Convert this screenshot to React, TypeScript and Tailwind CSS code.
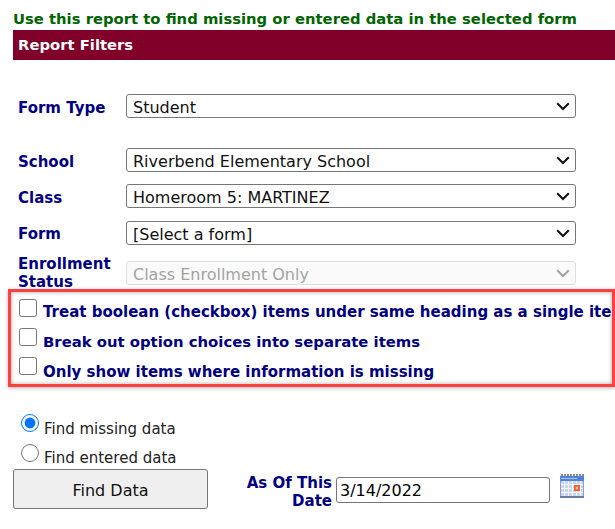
const font = "font-['DejaVu_Sans',Verdana,sans-serif]";

function Row({ label, value, options, className = "", labelClass = "translate-y-[2px]" }: { label: string; value: string; options?: boolean; className?: string; labelClass?: string }) {
  return (
    <div className={`flex items-center ${className}`}>
      <label className={`w-[113px] pl-[5px] text-[15px] leading-[18px] font-bold text-[#000080] ${labelClass}`}>{label}</label>
      <div className="relative h-[24px] w-[450px]">
        <select
          defaultValue={value}
          disabled={options}
          className={`h-full w-full appearance-none rounded-[3px] border pt-[3px] pl-[6px] text-[16px] leading-[20px] ${options ? "border-[#e0e0e0] bg-[#fafafa] text-[#a3a3a3]" : "border-[#767676] bg-white text-[#111111]"}`}
        >
          <option>{value}</option>
        </select>
        <svg width="14" height="9" viewBox="0 0 14 9" className="pointer-events-none absolute top-[8px] right-[6px]" fill="none" stroke={options ? "#a3a3a3" : "#111111"} strokeWidth="2">
          <path d="M1.2 1.2 L7 7 L12.8 1.2" />
        </svg>
      </div>
    </div>
  );
}

function Check({ label, textClass }: { label: string; textClass: string }) {
  return (
    <label className="flex h-[29px] items-center whitespace-nowrap">
      <input type="checkbox" className="mr-[6px] ml-[8px] h-[18px] w-[18px] shrink-0 -translate-y-[3px]" />
      <span className={`font-bold text-[#000080] ${textClass}`}>{label}</span>
    </label>
  );
}

function Calendar() {
  return (
    <svg width="24" height="24" viewBox="0 0 24 24" className="ml-[10px] -translate-y-[3px]">
      <rect x="0" y="2" width="24" height="21" fill="#8da0c8" />
      {[1, 4, 7, 10, 13, 16, 19, 22].map((x) => <rect key={x} x={x} y="0" width="2" height="2" fill="#8a8a8a" />)}
      <rect x="0" y="2" width="24" height="5" fill="#4f82dc" />
      <rect x="1" y="4" width="16" height="1" fill="#a9c4ee" />
      <rect x="1" y="7" width="22" height="15" fill="#c9d6ee" />
      {[4, 8, 12, 16, 20].map((x) => <rect key={x} x={x} y="7" width="1" height="15" fill="#f4f7fc" />)}
      {[10, 14, 18].map((y) => <rect key={y} x="1" y={y} width="22" height="1" fill="#f4f7fc" />)}
      <rect x="14" y="11" width="6" height="6" fill="#f2683c" />
      <rect x="16" y="13" width="2" height="2" fill="#f8d0c0" />
      <rect x="0" y="22" width="24" height="2" fill="#6a7aa0" />
    </svg>
  );
}

export default function App() {
  return (
    <div className={`h-[529px] w-[615px] overflow-hidden bg-white ${font}`}>
      <p className="h-[30px] whitespace-nowrap pt-[10px] pl-[13px] text-[14.8px] leading-[17px] font-bold text-[#006400]">
        Use this report to find missing or entered data in the selected form
      </p>
      <div className="ml-[13px] flex h-[30px] items-center pl-[5px] text-[14.8px] font-bold text-white bg-[#80002a]">Report Filters</div>

      <div className="ml-[13px] flex flex-col pt-[34px]">
        <Row label="Form Type" value="Student" className="h-[24px]" />
        <Row label="School" value="Riverbend Elementary School" className="mt-[30px] h-[24px]" />
        <Row label="Class" value="Homeroom 5: MARTINEZ" className="mt-[12px] h-[24px]" />
        <Row label="Form" value="[Select a form]" labelClass="translate-y-[1px]" className="mt-[13px] h-[24px]" />
        <Row label="Enrollment Status" value="Class Enrollment Only" labelClass="translate-y-0" options className="mt-[16px] h-[24px]" />
      </div>

      <div className="mt-[4px] ml-[8px] h-[98px] w-[607px] overflow-hidden border-[3px] border-[#ff4040] shadow-[inset_0_0_4px_rgba(0,0,0,0.35),0_1px_4px_rgba(0,0,0,0.3)]">
        <div className="flex flex-col pt-[4px]">
          <Check label="Treat boolean (checkbox) items under same heading as a single item" textClass="translate-y-[2px] text-[15px]" />
          <Check label="Break out option choices into separate items" textClass="translate-y-[3px] text-[14.85px]" />
          <Check label="Only show items where information is missing" textClass="translate-y-[4px] text-[15px]" />
        </div>
      </div>

      <div className="mt-[22px] ml-[21px] flex flex-col text-[15px] text-[#222222]">
        <label className="flex h-[30px] items-center">
          <input type="radio" name="find" defaultChecked className="mr-[5px] h-[18px] w-[18px] -translate-y-[1px]" />
          <span className="translate-y-[5px]">Find missing data</span>
        </label>
        <label className="flex h-[29px] items-center">
          <input type="radio" name="find" className="mr-[5px] h-[18px] w-[18px] -translate-y-[1px]" />
          <span className="translate-y-[5px]">Find entered data</span>
        </label>
      </div>

      <div className="mt-[1px] ml-[13px] flex items-center">
        <button className="h-[40px] w-[195px] rounded-[3px] border border-[#767676] bg-[#efefef] pt-[3px] text-[16px] text-[#111111]">Find Data</button>
        <div className="ml-[34px] w-[90px] translate-y-[3px] text-right text-[15px] leading-[18px] font-bold text-[#000080]">As Of This Date</div>
        <input defaultValue="3/14/2022" className="ml-[4px] h-[26px] w-[214px] translate-y-[1px] rounded-[3px] border border-[#767676] bg-white pl-[3px] text-[16px] text-black" />
        <Calendar />
      </div>
    </div>
  );
}
